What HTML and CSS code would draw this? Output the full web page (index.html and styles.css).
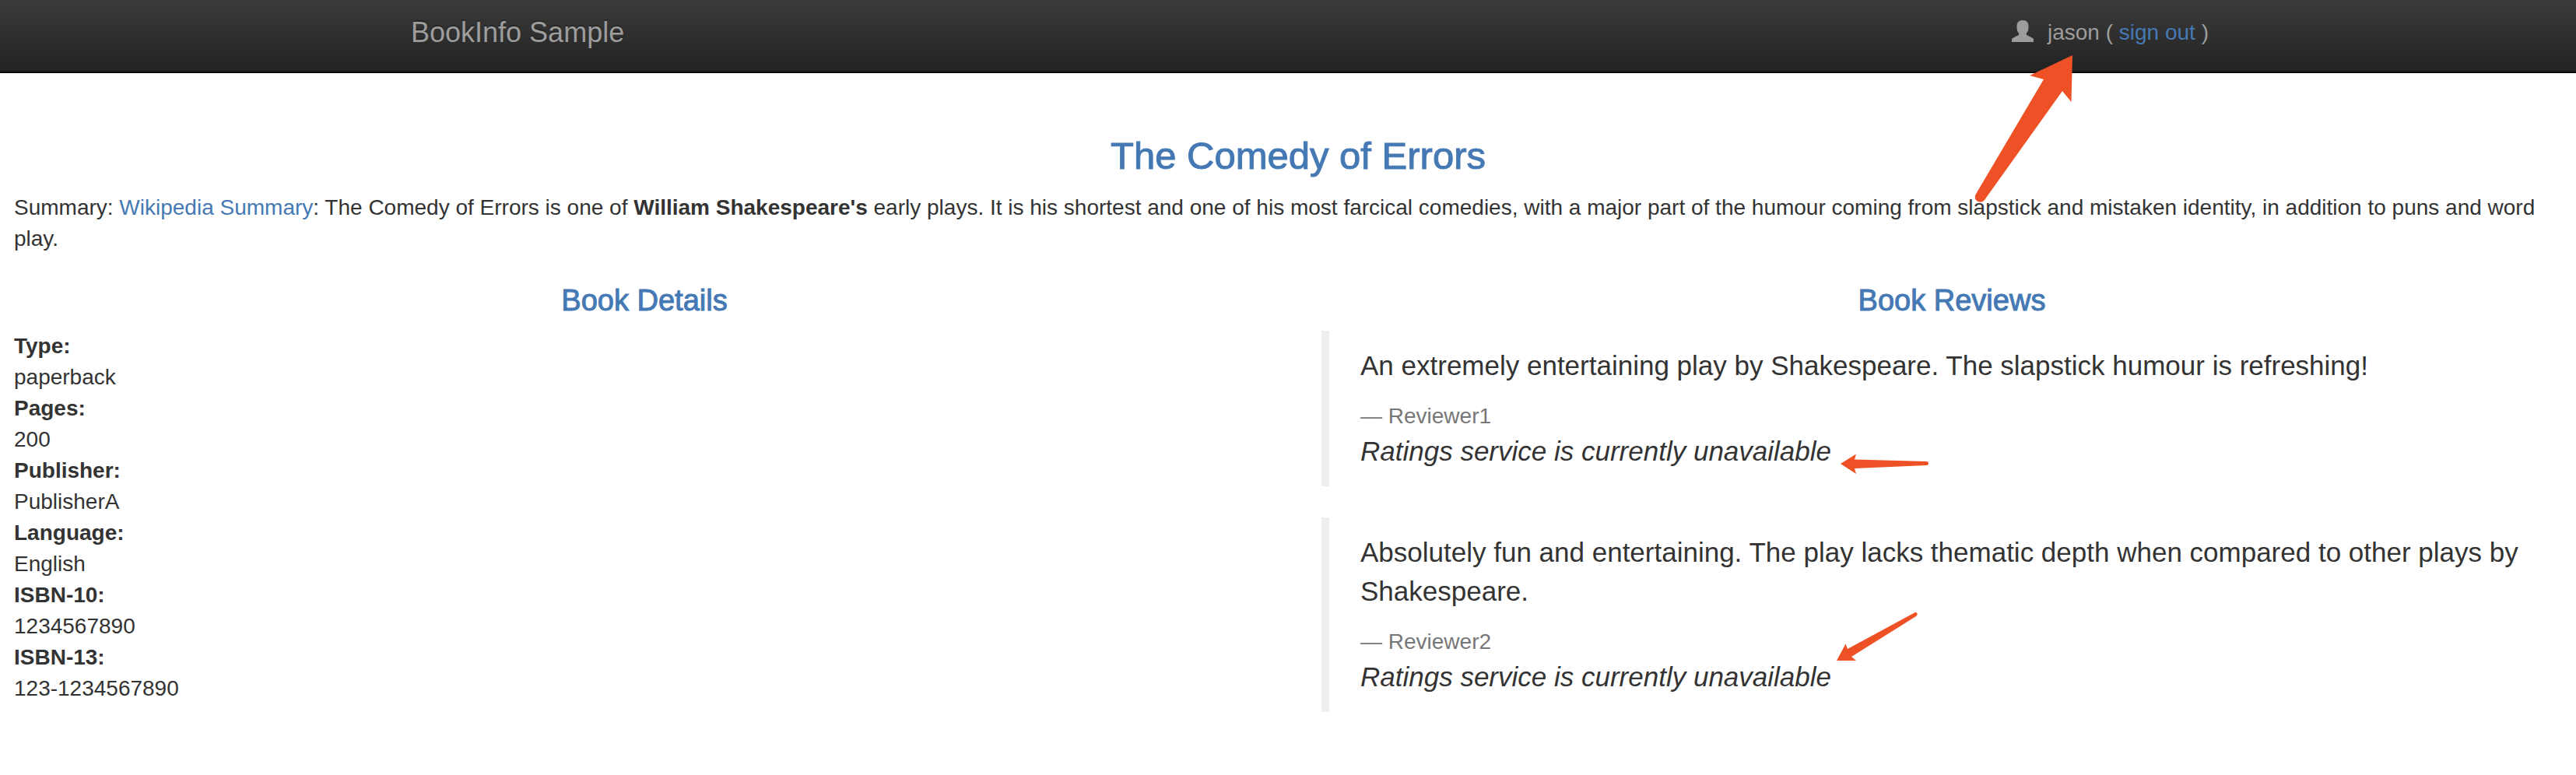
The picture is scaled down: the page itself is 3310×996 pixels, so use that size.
FILE: index.html
```html
<!DOCTYPE html>
<html lang="en">
<head>
<meta charset="utf-8">
<meta name="viewport" content="width=device-width, initial-scale=1">
<title>Simple Bookstore App</title>
<link rel="stylesheet" href="styles.css">
</head>
<body>
<div class="page">
  <nav class="navbar">
    <div class="navbar-container">
      <a class="navbar-brand" href="#">BookInfo Sample</a>
      <p class="navbar-user">
        <svg class="user-icon" viewBox="0 0 28 28" aria-hidden="true"><path d="M14 0c5 0 7.500 3 7.500 7.500c0 3-.2 6.500-1.500 7.800c-.8 .8-1.300 1.200-1.300 2.200c0 1.200 .5 1.600 1.500 2l6.300 3.300c1 .6 1.500 1.200 1.500 2.200v3H0v-3c0-1 .5-1.600 1.500-2.200l6.300-3.300c1-.4 1.500-.8 1.500-2c0-1-.5-1.400-1.300-2.200c-1.300-1.300-1.500-4.800-1.500-7.800C6.500 3 9 0 14 0z"/></svg>
        <span>jason ( <a class="link" href="#">sign out</a> )</span>
      </p>
    </div>
  </nav>
  <main class="content">
    <h3 class="title">The Comedy of Errors</h3>
    <p class="summary">Summary: <a class="link" href="#">Wikipedia Summary</a>: The Comedy of Errors is one of <b>William Shakespeare's</b> early plays. It is his shortest and one of his most farcical comedies, with a major part of the humour coming from slapstick and mistaken identity, in addition to puns and word play.</p>
    <div class="columns">
      <section>
        <h4 class="subtitle">Book Details</h4>
        <dl class="details">
          <dt>Type:</dt><dd>paperback</dd>
          <dt>Pages:</dt><dd>200</dd>
          <dt>Publisher:</dt><dd>PublisherA</dd>
          <dt>Language:</dt><dd>English</dd>
          <dt>ISBN-10:</dt><dd>1234567890</dd>
          <dt>ISBN-13:</dt><dd>123-1234567890</dd>
        </dl>
      </section>
      <section>
        <h4 class="subtitle">Book Reviews</h4>
        <blockquote class="review">
          <p class="review-text">An extremely entertaining play by Shakespeare. The slapstick humour is refreshing!</p>
          <small class="reviewer">Reviewer1</small>
          <p class="rating"><i>Ratings service is currently unavailable</i></p>
        </blockquote>
        <blockquote class="review">
          <p class="review-text">Absolutely fun and entertaining. The play lacks thematic depth when compared to other plays by Shakespeare.</p>
          <small class="reviewer">Reviewer2</small>
          <p class="rating"><i>Ratings service is currently unavailable</i></p>
        </blockquote>
      </section>
    </div>
  </main>
</div>
<svg class="arrow arrow-user" viewBox="0 0 126 190" aria-hidden="true"><path d="M125 0L70 26L88 31L0 180C-2 187 7 192 12 186L112 46L123.500 60Z"/></svg>
<svg class="arrow arrow-first" viewBox="0 0 114 26" aria-hidden="true"><path d="M0 13L20 .5L18 7.500L110 10Q113 10 113 12.500Q113 15 110 15L18 19L20 26Z"/></svg>
<svg class="arrow arrow-second" viewBox="0 0 104 62" aria-hidden="true"><path d="M0 62L11.500 40.500L14 47L99 1Q102-1 103.500 1.500Q104 3.500 102 5L19 57L25 62Z"/></svg>
</body>
</html>
```

FILE: styles.css
```css
* {
  box-sizing: border-box;
}

body {
  position: relative;
  margin: 0;
  overflow-x: hidden;
  background: #fff;
  color: #333;
  font-family: "Helvetica Neue", "Liberation Sans", Arial, sans-serif;
  font-size: 28px;
  line-height: 40px;
}

p,
h3,
h4,
dl,
dd,
blockquote {
  margin: 0;
}

.page {
  margin: 0 -38px 0 -12px;
}

.link {
  color: #4579b4;
  text-decoration: none;
}

/* Navigation bar */
.navbar {
  border-bottom: 2px solid #080808;
  background: linear-gradient(#3b3b3b, #222);
}

.navbar-container {
  display: flex;
  justify-content: space-between;
  max-width: 2340px;
  margin: 0 auto;
  padding: 22px 0 30px 30px;
}

.navbar-brand {
  color: #9d9d9d;
  font-size: 36px;
  text-decoration: none;
  text-shadow: 0 -2px 0 rgba(0, 0, 0, 0.25);
}

.navbar-user {
  display: flex;
  gap: 18px;
  color: #9d9d9d;
}

.user-icon {
  width: 28px;
  height: 28px;
  margin-top: 4px;
  fill: #9d9d9d;
}

/* Book page */
.content {
  padding: 80px 30px;
}

.title,
.subtitle {
  color: #4579b4;
  font-weight: 400;
  text-align: center;
  -webkit-text-stroke: 1px #4579b4;
}

.title {
  margin-bottom: 20px;
  font-size: 49px;
  line-height: 53px;
}

.columns {
  display: grid;
  grid-template-columns: 1fr 1fr;
  gap: 60px;
  margin-top: 40px;
}

.subtitle {
  margin-bottom: 20px;
  font-size: 38px;
  line-height: 38px;
}

.details dt {
  font-weight: 700;
}

.review {
  margin-bottom: 40px;
  padding: 20px 40px;
  border-left: 10px solid #eee;
  font-size: 35px;
  line-height: 50px;
}

.review-text {
  margin-bottom: 20px;
}

.reviewer {
  display: block;
  color: #777;
  font-size: 28px;
  line-height: 40px;
}

.reviewer::before {
  content: "\2014\00a0";
}

/* Pointer arrows laid over the page */
.arrow {
  position: absolute;
  fill: #ef5126;
}

.arrow-user {
  top: 71px;
  left: 2538px;
  width: 126px;
  height: 190px;
}

.arrow-first {
  top: 583px;
  left: 2365px;
  width: 114px;
  height: 26px;
}

.arrow-second {
  top: 787px;
  left: 2360px;
  width: 104px;
  height: 62px;
}
```
